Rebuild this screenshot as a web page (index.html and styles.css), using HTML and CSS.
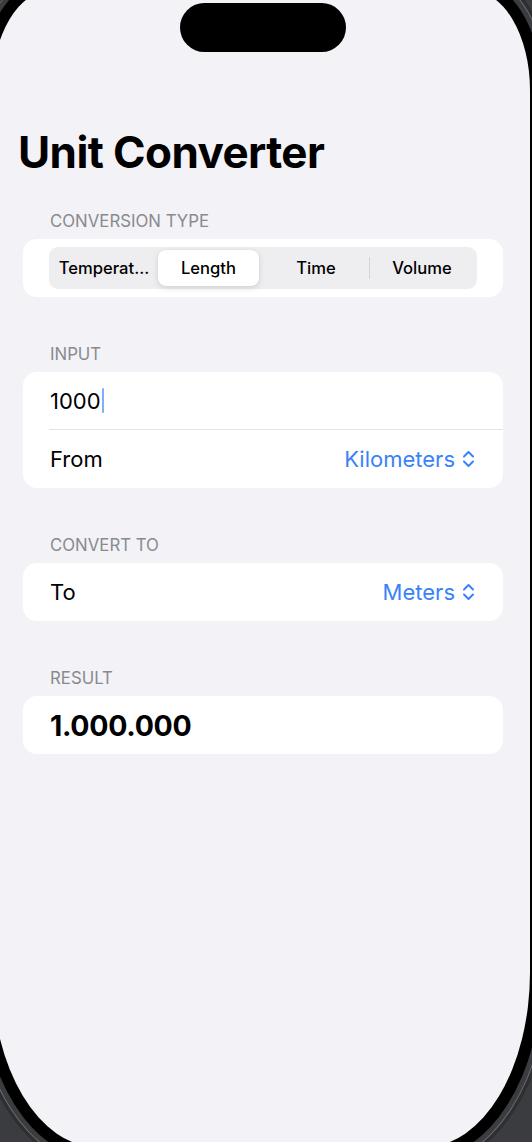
FILE: index.html
```html
<!DOCTYPE html>
<html lang="en">
<head>
<meta charset="utf-8">
<title>Unit Converter</title>
<link rel="stylesheet" href="styles.css">
</head>
<body>
<div class="rim">
  <div class="bezel">
    <div class="screen">
      <div class="island"></div>
      <h1 class="title">Unit Converter</h1>
      <div class="sections">
        <section class="section">
          <div class="label">CONVERSION TYPE</div>
          <div class="card card-seg">
            <div class="segmented">
              <div class="seg">Temperat...</div>
              <div class="seg seg-selected">Length</div>
              <div class="seg">Time</div>
              <div class="seg seg-divider">Volume</div>
            </div>
          </div>
        </section>
        <section class="section">
          <div class="label">INPUT</div>
          <div class="card">
            <div class="row row-input"><span class="value">1000</span><span class="cursor"></span></div>
            <div class="sep"></div>
            <div class="row row-tall">
              <span class="row-title">From</span>
              <span class="picker">Kilometers
                <svg class="chev" viewBox="0 0 13 20" width="13" height="20"><path d="M2 7.5 L6.5 3 L11 7.5 M2 12.5 L6.5 17 L11 12.5" fill="none" stroke="currentColor" stroke-width="2" stroke-linecap="round" stroke-linejoin="round"/></svg>
              </span>
            </div>
          </div>
        </section>
        <section class="section">
          <div class="label">CONVERT TO</div>
          <div class="card">
            <div class="row row-tall">
              <span class="row-title">To</span>
              <span class="picker">Meters
                <svg class="chev" viewBox="0 0 13 20" width="13" height="20"><path d="M2 7.5 L6.5 3 L11 7.5 M2 12.5 L6.5 17 L11 12.5" fill="none" stroke="currentColor" stroke-width="2" stroke-linecap="round" stroke-linejoin="round"/></svg>
              </span>
            </div>
          </div>
        </section>
        <section class="section">
          <div class="label">RESULT</div>
          <div class="card">
            <div class="row row-tall result">1.000.000</div>
          </div>
        </section>
      </div>
    </div>
  </div>
</div>
</body>
</html>
```

FILE: styles.css
```css
html, body {
  margin: 0;
  padding: 0;
}
body {
  background: #3b3c3f;
  width: 532px;
  height: 1142px;
  overflow: hidden;
  font-family: "Inter", "Liberation Sans", sans-serif;
  color: #000;
}
.rim {
  margin: -32px 0 0 -30px;
  width: 582px;
  padding: 10px;
  box-sizing: border-box;
  background: #3b3c3f;
  border-radius: 82px 82px 127px 127px / 122px 122px 197px 197px;
  box-shadow: inset 0 0 0 4px #2e2f31, inset 0 0 0 5px #6a6b6f;
}
.bezel {
  padding: 12px;
  background: #000;
  border-radius: 72px 72px 117px 117px / 112px 112px 187px 187px;
}
.screen {
  position: relative;
  width: 538px;
  height: 1157px;
  background: #f2f2f7;
  border-radius: 60px 60px 105px 105px / 100px 100px 175px 175px;
  overflow: hidden;
  padding-top: 136px;
  box-sizing: border-box;
}
.island {
  position: absolute;
  left: 188px;
  top: 13px;
  width: 166px;
  height: 49px;
  border-radius: 25px;
  background: #000;
}
.title {
  margin: 0 0 33px 26px;
  font-size: 44px;
  line-height: 52px;
  font-weight: 700;
  letter-spacing: -0.6px;
}
.sections {
  padding: 0 27px 0 31px;
  display: flex;
  flex-direction: column;
  gap: 47px;
}
.label {
  padding-left: 27px;
  font-size: 16.8px;
  line-height: 20px;
  color: #8a8a8e;
  margin-bottom: 8px;
}
.card {
  background: #fff;
  border-radius: 14px;
  overflow: hidden;
}
.card-seg {
  padding: 8px 26px;
}
.segmented {
  display: grid;
  grid-template-columns: repeat(4, 1fr);
  background: #eeeef0;
  border-radius: 9px;
  padding: 3px 2px;
  height: 42px;
  box-sizing: border-box;
}
.seg {
  position: relative;
  font-size: 16.6px;
  font-weight: 500;
  line-height: 36px;
  text-align: center;
  white-space: nowrap;
}
.seg-selected {
  background: #fff;
  border-radius: 8px;
  margin: 0 4px 0 1px;
  box-shadow: 0 2px 6px rgba(0,0,0,0.12), 0 0 1px rgba(0,0,0,0.08);
}
.seg-divider::before {
  content: "";
  position: absolute;
  left: 0;
  top: 7px;
  bottom: 7px;
  width: 1px;
  background: #d4d4d8;
}
.row {
  display: flex;
  align-items: center;
  padding: 0 28px 0 27px;
  font-size: 22px;
}
.row-input {
  height: 57px;
}
.row-tall {
  height: 58px;
  justify-content: space-between;
}
.cursor {
  display: inline-block;
  width: 2px;
  height: 25px;
  margin-left: 1px;
  background: #7fb0f7;
  border-radius: 1px;
}
.sep {
  height: 1px;
  margin-left: 26px;
  background: #e4e4e8;
}
.picker {
  display: flex;
  align-items: center;
  gap: 7px;
  color: #3a82f7;
}
.chev {
  display: block;
}
.result {
  font-size: 28.5px;
  font-weight: 700;
  letter-spacing: -0.3px;
  justify-content: flex-start;
}
```
